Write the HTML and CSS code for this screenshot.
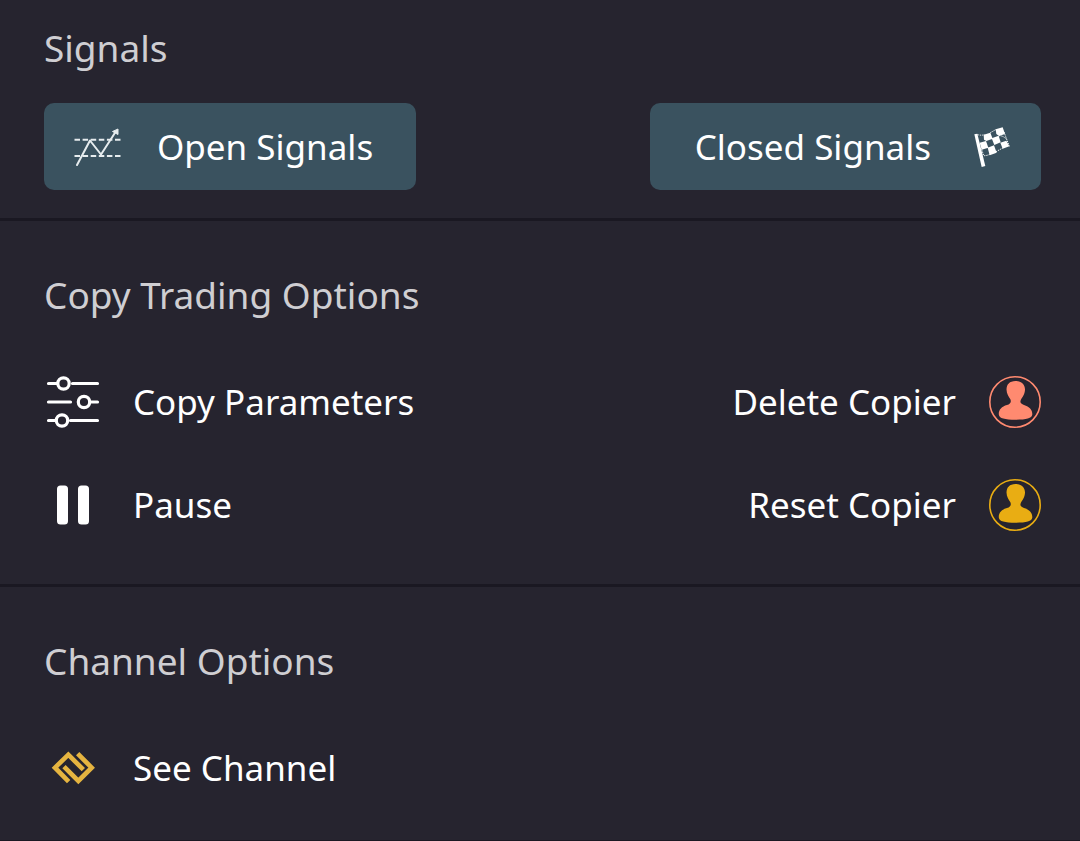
FILE: index.html
```html
<!DOCTYPE html>
<html lang="en">
<head>
<meta charset="utf-8">
<meta name="viewport" content="width=device-width, initial-scale=1">
<title>Signals</title>
<link rel="stylesheet" href="styles.css">
</head>
<body>
<main>
  <section class="section section-signals">
    <h2 class="heading">Signals</h2>
    <div class="row">
      <button class="signal-button signal-open" type="button">
        <svg class="icon-signal" viewBox="73 122 50 50" fill="none" stroke="#e6ecee" aria-hidden="true">
          <path d="M74.500 139.700H121M74.500 156H121" stroke-width="2" stroke-dasharray="5.500 2.600"/>
          <path d="M77 165L90 140.500L101 154.500L115.500 132" stroke-width="2" stroke-linejoin="round" stroke-linecap="round"/>
          <path d="M112.500 131.500L118 129L118 134.500Z" fill="#e6ecee" stroke-width="1"/>
        </svg>
        Open Signals
      </button>
      <button class="signal-button signal-closed" type="button">
        Closed Signals
        <svg class="icon-flag" viewBox="21 20 111 120" fill="#fff" aria-hidden="true">
          <path d="M25 42L34 40L58 137L47 140Z"/>
          <path d="M53 43L73 37L80 55L61 62L54 58Z M89 27L110 21L117 41L99 47L91 41Z M41 67L60 62L67 82L47 88Z M77 54L98 46L104 66L85 74Z M65 82L84 75L92 97L71 105Z M103 67L121 61L130 78L110 85Z"/>
          <path d="M34 43Q46 46 56 43M73 37L91 27M114 35L130 78M54 106Q64 106 73 101M90 94L112 82M99 46Q112 46 122 57M47 87L53 106" fill="none" stroke="#fff" stroke-width="3" stroke-dasharray="4 3"/>
        </svg>
      </button>
    </div>
  </section>

  <section class="section">
    <h2 class="heading">Copy Trading Options</h2>
    <div class="options">
      <div class="row">
        <button class="option" type="button">
          <svg class="icon" viewBox="0 0 56 56" fill="none" stroke="#fff" stroke-width="3.200" stroke-linecap="round" aria-hidden="true">
            <path d="M4.500 9.500H13M28.500 9.500H53.500M4.500 28H26.500M47 28H53.500M4.500 46.500H11M26.500 46.500H53.500"/>
            <circle cx="19.500" cy="9.500" r="5.700"/><circle cx="40" cy="28" r="5.700"/><circle cx="18" cy="46.500" r="5.700"/>
          </svg>
          Copy Parameters
        </button>
        <button class="option" type="button">
          Delete Copier
          <svg class="icon-user user-delete" viewBox="0 0 52 52" aria-hidden="true">
            <circle cx="26" cy="26" r="25.200" fill="none" stroke="currentColor" stroke-width="1.600"/>
            <path d="M26.500 5C32.500 5 36 8.500 36 13.500C36 18 33.500 21 32 23.500C30.500 26.500 32 28 35 29C40.500 30.500 43.500 34 43.300 38.500C43 42.500 37 43.700 26.500 43.700C16 43.700 10 42.500 9.800 38.500C9.500 34 12.500 30.500 18 29C21 28 22.500 26.500 21.500 23.500C20 21 17.500 18 17.500 13.500C17.500 8.500 20.500 5 26.500 5Z" fill="currentColor"/>
          </svg>
        </button>
      </div>
      <div class="row">
        <button class="option" type="button">
          <svg class="icon" viewBox="0 0 56 56" fill="#fff" aria-hidden="true">
            <rect x="13" y="8.500" width="11" height="39" rx="3.500"/><rect x="34" y="8.500" width="11" height="39" rx="3.500"/>
          </svg>
          Pause
        </button>
        <button class="option" type="button">
          Reset Copier
          <svg class="icon-user user-reset" viewBox="0 0 52 52" aria-hidden="true">
            <circle cx="26" cy="26" r="25.200" fill="none" stroke="currentColor" stroke-width="1.600"/>
            <path d="M26.500 5C32.500 5 36 8.500 36 13.500C36 18 33.500 21 32 23.500C30.500 26.500 32 28 35 29C40.500 30.500 43.500 34 43.300 38.500C43 42.500 37 43.700 26.500 43.700C16 43.700 10 42.500 9.800 38.500C9.500 34 12.500 30.500 18 29C21 28 22.500 26.500 21.500 23.500C20 21 17.500 18 17.500 13.500C17.500 8.500 20.500 5 26.500 5Z" fill="currentColor"/>
          </svg>
        </button>
      </div>
    </div>
  </section>

  <section class="section">
    <h2 class="heading">Channel Options</h2>
    <div class="options">
      <div class="row">
        <button class="option" type="button">
          <svg class="icon" viewBox="0 -10 168 168" fill="none" stroke="#e5b440" stroke-width="14" aria-hidden="true">
            <path d="M74 115L33 73L73 34L118 79"/>
            <path d="M101 31L143 73L103 113L60 70"/>
          </svg>
          See Channel
        </button>
      </div>
    </div>
  </section>
</main>
</body>
</html>
```
FILE: styles.css
```css
* {
  box-sizing: border-box;
}

body {
  margin: 0;
  background: #26242f;
  color: #fff;
  font-family: "Noto Sans", "Open Sans", sans-serif;
  font-size: 35px;
  line-height: 56px;
}

button {
  display: flex;
  align-items: center;
  border: 0;
  padding: 0;
  background: none;
  color: inherit;
  font: inherit;
  white-space: nowrap;
  cursor: pointer;
}

svg {
  flex: none;
  overflow: visible;
}

.section {
  padding: 46px 39px 51px 44px;
  border-bottom: 3px solid #1a1822;
}

.section:last-child {
  padding-bottom: 44px;
  border-bottom-width: 1px;
}

.section-signals {
  padding-top: 20px;
  padding-bottom: 28px;
}

.heading {
  margin: 0;
  color: #cfced2;
  font-size: 37px;
  font-weight: 400;
}

.row {
  display: flex;
  justify-content: space-between;
  align-items: center;
}

.section-signals .row {
  margin-top: 27px;
}

.signal-button {
  height: 87px;
  border-radius: 10px;
  background: #3a525f;
}

.signal-open {
  gap: 34px;
  padding: 0 43px 0 29px;
}

.signal-closed {
  gap: 42px;
  padding: 0 31px 0 45px;
}

.icon-signal {
  width: 50px;
  height: 50px;
}

.icon-flag {
  width: 37px;
  height: 40px;
}

.options {
  display: grid;
  gap: 47px;
  margin-top: 51px;
}

.option {
  gap: 33px;
}

.icon {
  width: 56px;
  height: 56px;
}

.icon-user {
  width: 52px;
  height: 52px;
}

.user-delete {
  color: #ff8a70;
}

.user-reset {
  color: #e9ad13;
}
```
